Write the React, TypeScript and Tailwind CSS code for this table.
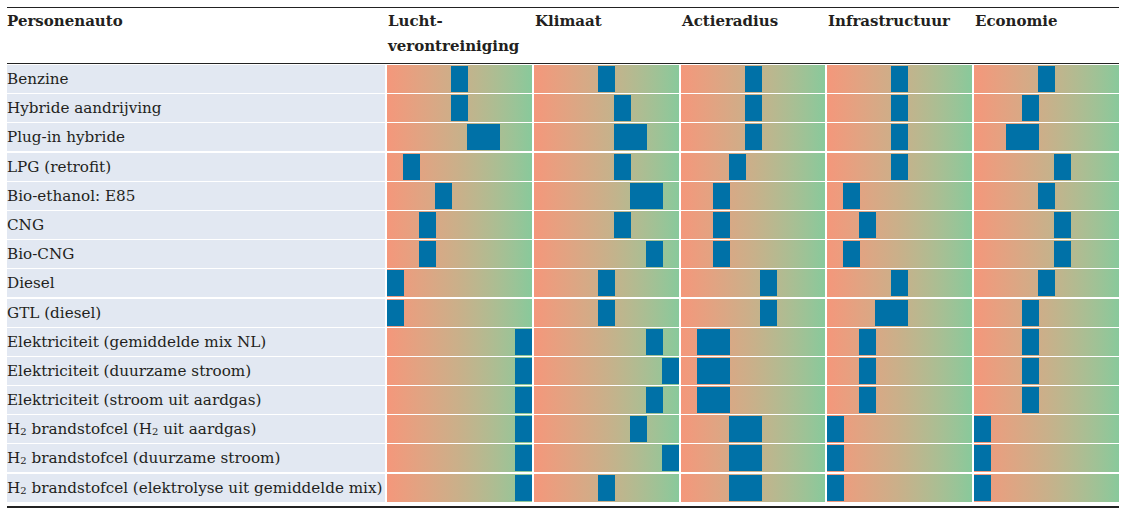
import React from 'react';

// kolommen: breedte van de balk in px
const columns = [
  { title: ['Lucht-', 'verontreiniging'], width: 145 },
  { title: ['Klimaat'], width: 145 },
  { title: ['Actieradius'], width: 144 },
  { title: ['Infrastructuur'], width: 145 },
  { title: ['Economie'], width: 145 },
];

type Mark = [number, number]; // [positie 0..8, breedte in stappen]

const H2 = () => (
  <>
    H<sub className="text-[10px] relative top-[1px]">2</sub>
  </>
);

const rows: { label: React.ReactNode; marks: Mark[] }[] = [
  { label: 'Benzine', marks: [[4, 1], [4, 1], [4, 1], [4, 1], [4, 1]] },
  { label: 'Hybride aandrijving', marks: [[4, 1], [5, 1], [4, 1], [4, 1], [3, 1]] },
  { label: 'Plug-in hybride', marks: [[5, 2], [5, 2], [4, 1], [4, 1], [2, 2]] },
  { label: 'LPG (retrofit)', marks: [[1, 1], [5, 1], [3, 1], [4, 1], [5, 1]] },
  { label: 'Bio-ethanol: E85', marks: [[3, 1], [6, 2], [2, 1], [1, 1], [4, 1]] },
  { label: 'CNG', marks: [[2, 1], [5, 1], [2, 1], [2, 1], [5, 1]] },
  { label: 'Bio-CNG', marks: [[2, 1], [7, 1], [2, 1], [1, 1], [5, 1]] },
  { label: 'Diesel', marks: [[0, 1], [4, 1], [5, 1], [4, 1], [4, 1]] },
  { label: 'GTL (diesel)', marks: [[0, 1], [4, 1], [5, 1], [3, 2], [3, 1]] },
  { label: 'Elektriciteit (gemiddelde mix NL)', marks: [[8, 1], [7, 1], [1, 2], [2, 1], [3, 1]] },
  { label: 'Elektriciteit (duurzame stroom)', marks: [[8, 1], [8, 1], [1, 2], [2, 1], [3, 1]] },
  { label: 'Elektriciteit (stroom uit aardgas)', marks: [[8, 1], [7, 1], [1, 2], [2, 1], [3, 1]] },
  {
    label: (
      <>
        <H2 /> brandstofcel (<H2 /> uit aardgas)
      </>
    ),
    marks: [[8, 1], [6, 1], [3, 2], [0, 1], [0, 1]],
  },
  {
    label: (
      <>
        <H2 /> brandstofcel (duurzame stroom)
      </>
    ),
    marks: [[8, 1], [8, 1], [3, 2], [0, 1], [0, 1]],
  },
  {
    label: (
      <>
        <H2 /> brandstofcel (elektrolyse uit gemiddelde mix)
      </>
    ),
    marks: [[8, 1], [4, 1], [3, 2], [0, 1], [0, 1]],
  },
];

const grid = 'grid grid-cols-[378px_145px_145px_144px_145px_145px] gap-x-[2px]';

function Bar({ mark, width }: { mark: Mark; width: number }) {
  const [pos, span] = mark;
  const step = (width - 17) / 8;
  return (
    <div className="flex h-full pt-[1px] pb-[1px] bg-linear-to-r from-[#f4977b] via-[#c9b08a] to-[#88c99b]">
      <div className="shrink-0" style={{ width: Math.round(pos * step) }} />
      <div className="shrink-0 bg-[#0071a7]" style={{ width: 17 + (span - 1) * 16 }} />
    </div>
  );
}

export default function App() {
  return (
    <div className="bg-white w-[1135px] h-[514px] pt-[7px] pl-[7px] text-[#231f20] font-['DejaVu_Serif',serif]">
      <div className="w-[1112px] border-t-[1.5px] border-b-[2px] border-[#222]">
        <div className={`${grid} h-[56px] border-b-[1.5px] border-[#222] pt-[1px] text-[15px] font-bold leading-[25px]`}>
          <div>Personenauto</div>
          {columns.map((c, i) => (
            <div key={i} className="pl-[1px]">
              {c.title.map((t) => (
                <div key={t}>{t}</div>
              ))}
            </div>
          ))}
        </div>
        <div className="flex flex-col gap-[2.2px] pt-[1px] pb-[5px]">
          {rows.map((r, i) => (
            <div key={i} className={`${grid} h-[27px]`}>
              <div className="bg-[#e2e8f2] text-[15.2px] leading-[28px] whitespace-nowrap">{r.label}</div>
              {r.marks.map((m, j) => (
                <Bar key={j} mark={m} width={columns[j].width} />
              ))}
            </div>
          ))}
        </div>
      </div>
    </div>
  );
}
